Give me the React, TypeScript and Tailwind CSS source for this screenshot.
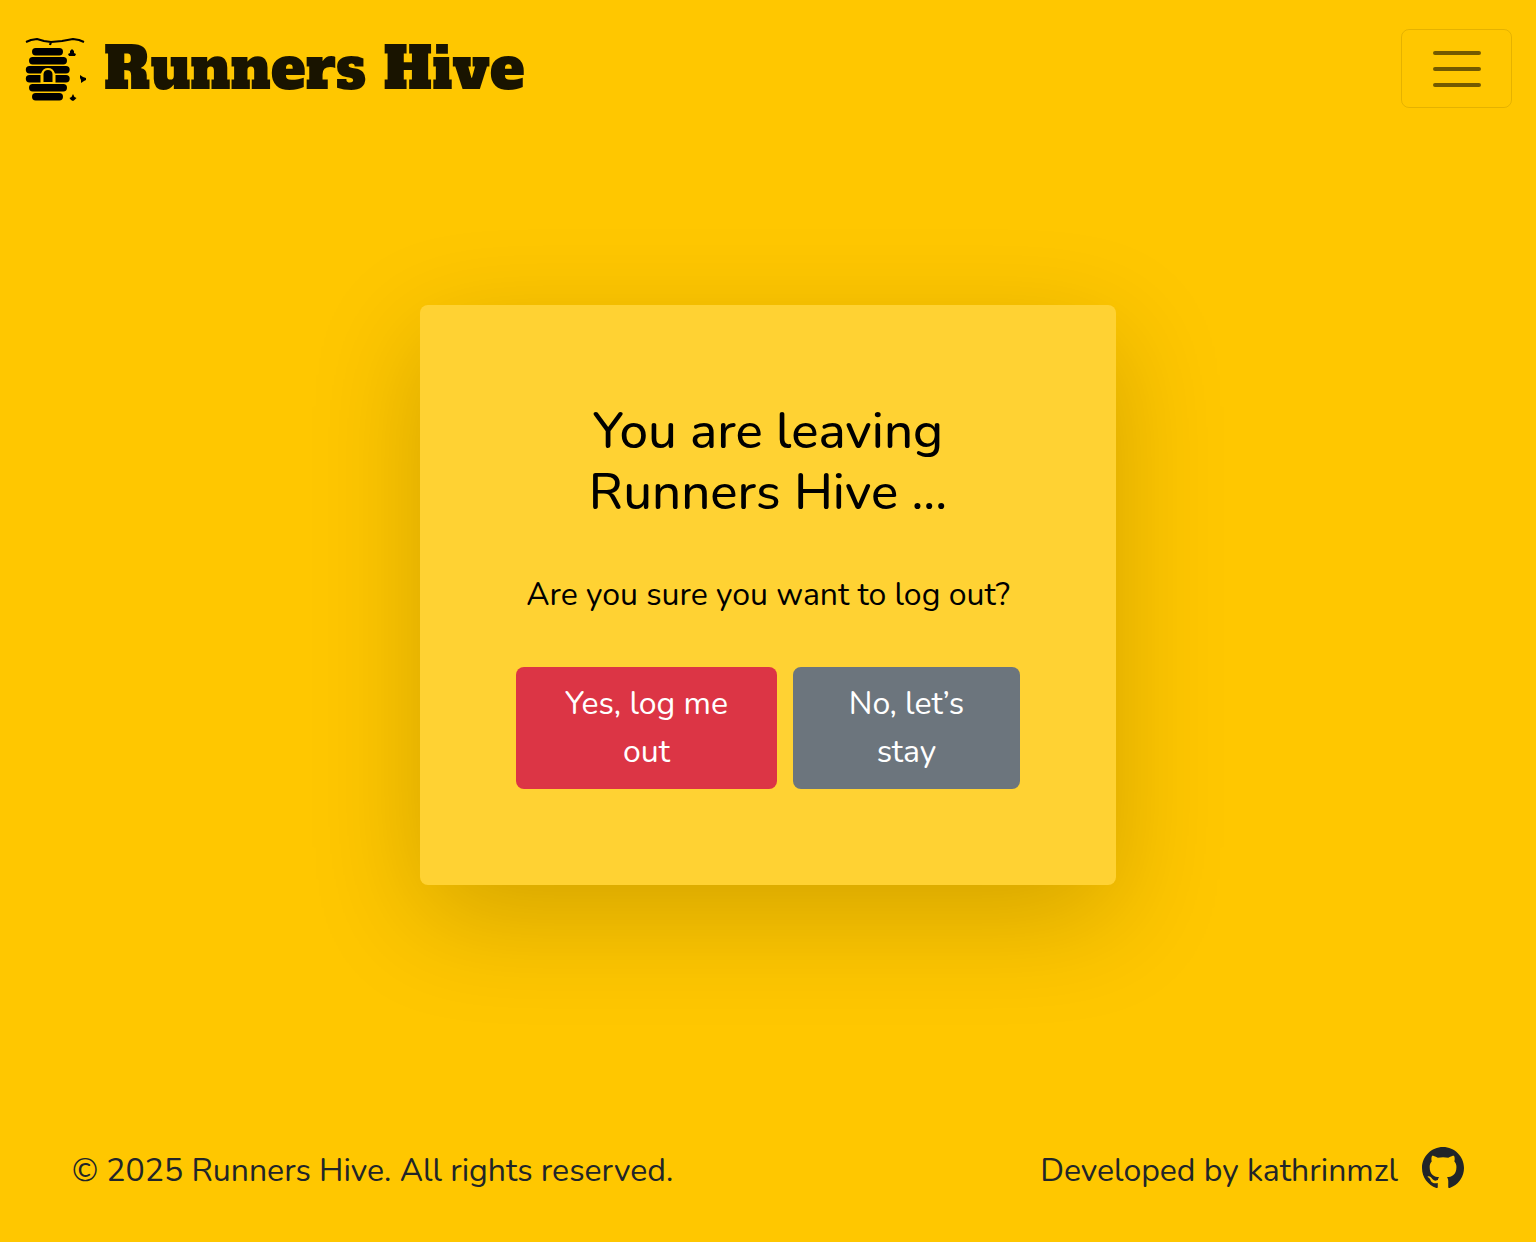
import { BsGithub } from "react-icons/bs";

function HiveLogo() {
  return (
    <svg viewBox="0 0 64 64" className="size-16 shrink-0 fill-black" aria-hidden="true">
      <path d="M2 5L7 3L13 2L20 4L27 5L38 4L49 2L55 3L60 5M27 5L26 8" fill="none" stroke="black" strokeWidth="2.2" strokeLinejoin="round" />
      <rect x="8" y="11" width="31" height="7.4" rx="3.7" />
      <rect x="5" y="20" width="38" height="7.4" rx="3.7" />
      <path d="M5.500 29H42A3.700 3.700 0 0 1 42 36.400H31Q29 31 24 31T17 36.400H5.500A3.700 3.700 0 0 1 5.500 29Z" />
      <path d="M5.500 38H16.500V45.400H5.500A3.700 3.700 0 0 1 5.500 38ZM31.500 38H42A3.700 3.700 0 0 1 42 45.400H31.500Z" />
      <path d="M19.500 45V37Q20 33 24 33T28.500 37V45Z" />
      <rect x="5" y="47" width="38" height="7.4" rx="3.7" />
      <rect x="8" y="56" width="31" height="7.4" rx="3.7" />
      <path d="M48 12L50 14V16L52 17L51 19H45L44 17L46 16V14Z" />
      <path d="M56 38L59 40L62 41V43L60 44L57 46V43L56 41Z" />
      <path d="M49 57L50.500 60L52.500 61L50.500 63L49 64L47 63L45.500 61L47.500 60Z" />
    </svg>
  );
}

export default function App() {
  return (
    <div className="flex min-h-screen flex-col bg-[#ffc700] font-['Nunito','Open_Sans',sans-serif] text-[32px] leading-[48px] text-[#212529]">
      <header className="flex items-center justify-between px-6 py-[29px]">
        <a href="#" className="flex items-center gap-4 text-black/90">
          <HiveLogo />
          <span className="font-['Alfa_Slab_One','DejaVu_Serif',serif] text-[58px] leading-[76px]">Runners Hive</span>
        </a>
        <button type="button" aria-label="Toggle navigation" className="flex h-[79px] w-[111px] items-center justify-center rounded-lg border border-black/10">
          <svg viewBox="0 0 30 30" className="size-[60px]" aria-hidden="true"><path d="M4 7h22M4 15h22M4 23h22" stroke="black" strokeOpacity=".55" strokeWidth="2" strokeLinecap="round" /></svg>
        </button>
      </header>
      <main className="flex flex-1 items-center justify-center pb-[46px]">
        <section className="flex w-full max-w-[696px] flex-col gap-12 rounded-lg bg-[#ffd233] p-24 text-center text-black shadow-[0_32px_112px_rgba(0,0,0,.18)]">
          <h1 className="text-[51px] leading-[61px] font-medium">You are leaving Runners Hive ...</h1>
          <p>Are you sure you want to log out?</p>
          <div className="flex justify-center gap-4 text-white">
            <button type="submit" className="rounded-lg bg-[#dc3545] px-6 py-[13px]">Yes, log me out</button>
            <a href="#" className="rounded-lg bg-[#6c757d] px-6 py-[13px]">No, let’s stay</a>
          </div>
        </section>
      </main>
      <footer className="flex items-center justify-between px-[72px] pt-12 pb-[47px]">
        <p>© 2025 Runners Hive. All rights reserved.</p>
        <div className="flex items-center gap-6">
          <p>Developed by kathrinmzl</p>
          <a href="#" aria-label="GitHub" className="pb-1.5"><BsGithub className="size-[42px]" /></a>
        </div>
      </footer>
    </div>
  );
}
